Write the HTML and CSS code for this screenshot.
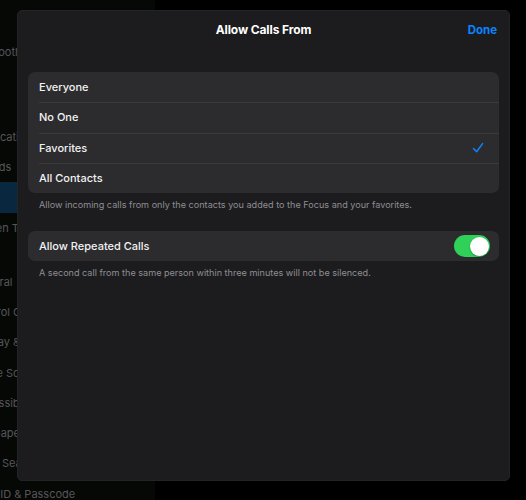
FILE: index.html
```html
<!DOCTYPE html>
<html lang="en">
<head>
<meta charset="utf-8">
<title>Allow Calls From</title>
<link rel="stylesheet" href="styles.css">
</head>
<body>
<div class="screen">
  <nav class="sidebar">
    <div class="group">
      <div class="side-row">Wi-Fi</div>
      <div class="side-row">Bluetooth</div>
      <div class="side-row">VPN</div>
    </div>
    <div class="group">
      <div class="side-row">Notifications</div>
      <div class="side-row">Sounds</div>
      <div class="side-row selected">Focus</div>
      <div class="side-row">Screen Time</div>
    </div>
    <div class="group">
      <div class="side-row">General</div>
      <div class="side-row">Control Center</div>
      <div class="side-row">Display &amp; Brightness</div>
      <div class="side-row">Home Screen &amp; Dock</div>
      <div class="side-row">Accessibility</div>
      <div class="side-row">Wallpaper</div>
      <div class="side-row">Siri &amp; Search</div>
      <div class="side-row">Face ID &amp; Passcode</div>
    </div>
  </nav>
  <main class="detail"></main>

  <section class="sheet">
    <header class="sheet-header">
      <h1 class="sheet-title">Allow Calls From</h1>
      <span class="done">Done</span>
    </header>
    <div class="sheet-body">
      <ul class="cells">
        <li class="cell">Everyone</li>
        <li class="cell">No One</li>
        <li class="cell">Favorites
          <svg class="check" viewBox="0 0 12 12" width="12" height="12" aria-hidden="true">
            <path d="M1.5 6.6 L4.6 9.8 L10.6 1.6" fill="none" stroke="#0a84ff" stroke-width="1.5" stroke-linecap="round" stroke-linejoin="round"/>
          </svg>
        </li>
        <li class="cell">All Contacts</li>
      </ul>
      <p class="footnote">Allow incoming calls from only the contacts you added to the Focus and your favorites.</p>

      <ul class="cells second">
        <li class="cell">Allow Repeated Calls
          <span class="toggle"><span class="knob"></span></span>
        </li>
      </ul>
      <p class="footnote">A second call from the same person within three minutes will not be silenced.</p>
    </div>
  </section>
</div>
</body>
</html>
```

FILE: styles.css
```css
* { box-sizing: border-box; }
html, body {
  margin: 0;
  padding: 0;
  background: #000;
}
body {
  font-family: "Inter", "Noto Sans", "Liberation Sans", sans-serif;
  color: #fff;
  width: 526px;
  height: 500px;
  overflow: hidden;
}
.screen {
  position: relative;
  width: 526px;
  height: 500px;
  display: flex;
}
.sidebar {
  width: 155px;
  height: 500px;
  background: #060806;
  padding-top: 7px;
  display: flex;
  flex-direction: column;
  gap: 24px;
  overflow: hidden;
}
.group {
  display: flex;
  flex-direction: column;
}
.side-row {
  height: 30.25px;
  line-height: 30px;
  font-size: 11px;
  color: #56565a;
  margin-left: -28px;
  white-space: nowrap;
}
.side-row.selected {
  background: #0a2740;
  margin-left: 0;
  color: transparent;
}
.detail {
  flex: 1;
  background: #000;
}
.sheet {
  position: absolute;
  left: 17px;
  top: 10px;
  width: 493px;
  height: 471px;
  background: #1c1c1e;
  border-radius: 5px;
  border: 1px solid #242426;
  display: flex;
  flex-direction: column;
}
.sheet-header {
  height: 37px;
  display: flex;
  align-items: center;
  justify-content: center;
  position: relative;
}
.sheet-title {
  margin: 0;
  font-size: 12px;
  font-weight: 700;
  letter-spacing: -0.1px;
}
.done {
  position: absolute;
  right: 12px;
  top: 12px;
  font-size: 11.5px;
  font-weight: 700;
  color: #0a84ff;
}
.sheet-body {
  padding: 24px 10px 0 10px;
}
.cells {
  list-style: none;
  margin: 0;
  padding: 0;
  background: #2c2c2e;
  border-radius: 7px;
  overflow: hidden;
}
.cell {
  position: relative;
  height: 30.25px;
  display: flex;
  align-items: center;
  justify-content: space-between;
  padding: 0 9px 0 11px;
  font-size: 11px;
  font-weight: 500;
  color: #f2f2f4;
}
.cell + .cell::before {
  content: "";
  position: absolute;
  left: 11px;
  right: 0;
  top: 0;
  height: 1px;
  background: #3a3a3c;
}
.check {
  margin-right: 6px;
}
.footnote {
  margin: 0;
  padding: 6px 11px 0 11px;
  font-size: 9.1px;
  color: #8e8e93;
  line-height: 12px;
}
.second {
  margin-top: 20px;
}
.second .cell {
  height: 30px;
}
.toggle {
  width: 36px;
  height: 22px;
  border-radius: 11px;
  background: #30d158;
  display: flex;
  align-items: center;
  justify-content: flex-end;
  padding: 0 1.5px;
}
.knob {
  width: 19px;
  height: 19px;
  border-radius: 50%;
  background: #fff;
  box-shadow: 0 1px 2px rgba(0,0,0,0.3);
}
```
